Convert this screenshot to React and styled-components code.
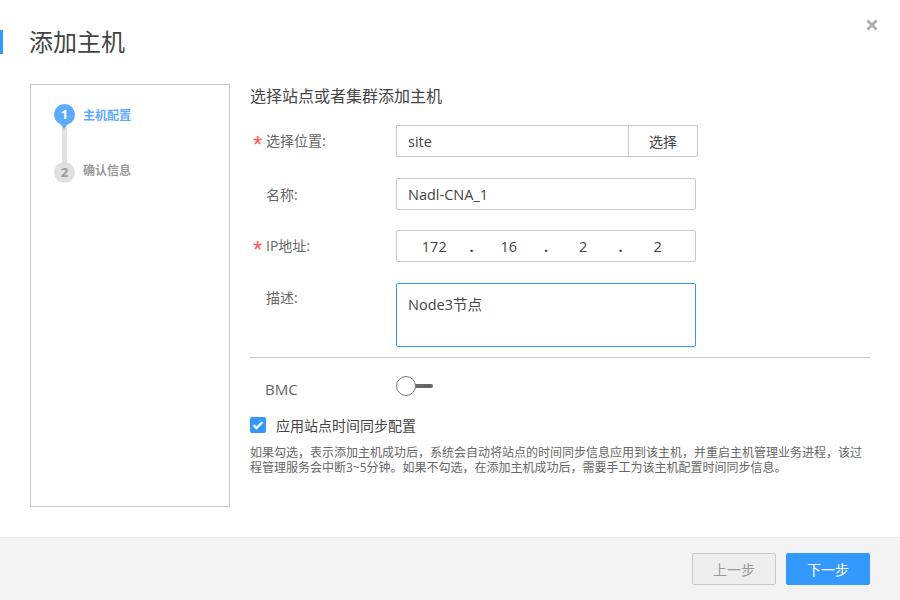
import React from "react";
import styled, { createGlobalStyle } from "styled-components";

const GlobalStyle = createGlobalStyle`
	html, body {
		margin: 0;
		padding: 0;
		background: #fff;
	}
	body {
		font-family: "Open Sans", "Noto Sans CJK SC", sans-serif;
		color: #333;
	}
	* {
		box-sizing: border-box;
	}
`;

const Dialog = styled.div`
	position: relative;
	width: 900px;
	height: 600px;
	display: flex;
	flex-direction: column;
	overflow: hidden;
`;

const Close = styled.svg`
	position: absolute;
	top: 19px;
	right: 22px;
	width: 12px;
	height: 12px;
`;

const Header = styled.div`
	height: 84px;
	padding-top: 30px;
`;

const Title = styled.h1`
	margin: 0;
	height: 24px;
	padding-left: 26px;
	border-left: 3px solid #3399ff;
	font-size: 24px;
	line-height: 24px;
	font-weight: 400;
	color: #444;
`;

const Body = styled.div`
	display: flex;
	gap: 20px;
	padding: 0 30px;
	height: 453px;
`;

const Steps = styled.div`
	width: 200px;
	height: 423px;
	border: 1px solid #c8c8c8;
	padding: 19px 0 0 23px;
`;

const Step = styled.div`
	position: relative;
	display: flex;
	gap: 8px;
	height: ${(p) => (p.$last ? "22px" : "58px")};
`;

const Dot = styled.div`
	position: relative;
	z-index: 1;
	width: 21px;
	height: 21px;
	border-radius: 50%;
	background: ${(p) => (p.$active ? "#5cabff" : "#e0e0e0")};
	color: ${(p) => (p.$active ? "#fff" : "#999")};
	font-size: 13px;
	font-weight: 700;
	line-height: 20px;
	text-align: center;
	&::after {
		content: "";
		display: ${(p) => (p.$active ? "block" : "none")};
		position: absolute;
		left: 5px;
		top: 18px;
		border-left: 5.5px solid transparent;
		border-right: 5.5px solid transparent;
		border-top: 7px solid #5cabff;
	}
`;

const Connector = styled.div`
	position: absolute;
	left: 8px;
	top: 20px;
	width: 5px;
	height: 42px;
	background: #e0e0e0;
`;

const StepLabel = styled.span`
	margin-top: ${(p) => (p.$active ? "2px" : "-1px")};
	font-size: 12px;
	line-height: 20px;
	font-weight: 700;
	color: ${(p) => (p.$active ? "#5cabff" : "#999")};
`;

const Main = styled.div`
	width: 620px;
`;

const Heading = styled.div`
	height: 24px;
	font-size: 16px;
	line-height: 24px;
	color: #444;
`;

const Row = styled.div`
	display: flex;
	align-items: ${(p) => (p.$top ? "flex-start" : "center")};
	height: ${(p) => p.$h}px;
	margin-top: ${(p) => p.$mt}px;
`;

const Label = styled.label`
	position: relative;
	width: 146px;
	padding-left: 16px;
	font-size: 14px;
	line-height: 20px;
	color: #666;
	margin-top: ${(p) => p.$mt || 0}px;
`;

const BmcLabel = styled(Label)`
	padding-left: 15px;
	font-size: 15px;
`;

const Star = styled.span`
	position: absolute;
	left: 3px;
	top: 1px;
	font-family: "Liberation Sans", sans-serif;
	font-size: 24px;
	line-height: 26px;
	color: #f55;
`;

const Field = styled.div`
	width: 300px;
	height: 100%;
	display: flex;
	align-items: center;
	padding: 0 11px;
	border: 1px solid #c8c8c8;
	border-radius: 2px;
	font-size: 14.5px;
	color: #444;
`;

const SiteField = styled(Field)`
	width: 232px;
	border-right: 0;
	border-radius: 2px 0 0 2px;
`;

const PickButton = styled.button`
	width: 70px;
	height: 100%;
	padding: 0;
	border: 1px solid #c8c8c8;
	border-radius: 0 2px 2px 0;
	background: #fff;
	font: inherit;
	font-size: 14px;
	color: #444;
`;

const IpField = styled(Field)`
	padding: 0;
	justify-content: space-between;
`;

const Octet = styled.span`
	width: 75px;
	text-align: center;
`;

const IpDot = styled.span`
	width: 0;
	display: flex;
	justify-content: center;
	font-weight: 700;
`;

const TextArea = styled(Field)`
	align-items: flex-start;
	padding-top: 11px;
	line-height: 20px;
	border-color: #3399ff;
`;

const Divider = styled.div`
	height: 1px;
	margin-top: 10px;
	background: #c8c8c8;
`;

const Switch = styled.div`
	position: relative;
	width: 37px;
	height: 20px;
	margin-top: -6px;
	&::before {
		content: "";
		position: absolute;
		left: 16px;
		top: 8px;
		width: 21px;
		height: 4px;
		border-radius: 2px;
		background: #666;
	}
`;

const Knob = styled.div`
	position: absolute;
	left: 0;
	top: 0;
	width: 20px;
	height: 20px;
	border-radius: 50%;
	border: 1px solid #777;
	background: #fff;
`;

const CheckRow = styled.div`
	display: flex;
	align-items: center;
	gap: 10px;
	margin-top: 16px;
	height: 20px;
	font-size: 14px;
	color: #444;
`;

const CheckBox = styled.span`
	width: 16px;
	height: 16px;
	display: flex;
	align-items: center;
	justify-content: center;
	border-radius: 2px;
	background: #3399ff;
`;

const Help = styled.p`
	margin: 10px 0 0;
	width: 620px;
	font-size: 12px;
	line-height: 15px;
	color: #666;
`;

const Footer = styled.div`
	flex: 1;
	display: flex;
	justify-content: flex-end;
	gap: 10px;
	padding: 15px 30px 0;
	background: #f3f3f3;
	border-top: 1px solid #ebebeb;
`;

const FooterButton = styled.button`
	width: 84px;
	height: 32px;
	padding: 0;
	border-radius: 2px;
	border: 1px solid ${(p) => (p.$primary ? "#3399ff" : "#c8c8c8")};
	background: ${(p) => (p.$primary ? "#3399ff" : "#eee")};
	color: ${(p) => (p.$primary ? "#fff" : "#999")};
	font: inherit;
	font-size: 14px;
`;

const App = () => {
	return (
		<Dialog>
			<GlobalStyle />
			<Close viewBox="0 0 12 12">
				<path d="M1.5 1.5L10.5 10.5M10.5 1.5L1.5 10.5" stroke="#b0b0b0" strokeWidth="3" />
			</Close>
			<Header>
				<Title>添加主机</Title>
			</Header>
			<Body>
				<Steps>
					<Step>
						<Connector />
						<Dot $active>1</Dot>
						<StepLabel $active>主机配置</StepLabel>
					</Step>
					<Step $last>
						<Dot>2</Dot>
						<StepLabel>确认信息</StepLabel>
					</Step>
				</Steps>
				<Main>
					<Heading>选择站点或者集群添加主机</Heading>
					<Row $h={32} $mt={17}>
						<Label>
							<Star>*</Star>选择位置:
						</Label>
						<SiteField>site</SiteField>
						<PickButton>选择</PickButton>
					</Row>
					<Row $h={32} $mt={21}>
						<Label $mt={1}>名称:</Label>
						<Field>Nadl-CNA_1</Field>
					</Row>
					<Row $h={32} $mt={20}>
						<Label>
							<Star>*</Star>IP地址:
						</Label>
						<IpField>
							<Octet>172</Octet>
							<IpDot>.</IpDot>
							<Octet>16</Octet>
							<IpDot>.</IpDot>
							<Octet>2</Octet>
							<IpDot>.</IpDot>
							<Octet>2</Octet>
						</IpField>
					</Row>
					<Row $h={64} $mt={21} $top>
						<Label $mt={5}>描述:</Label>
						<TextArea>Node3节点</TextArea>
					</Row>
					<Divider />
					<Row $h={20} $mt={21}>
						<BmcLabel $mt={-1}>BMC</BmcLabel>
						<Switch>
							<Knob />
						</Switch>
					</Row>
					<CheckRow>
						<CheckBox>
							<svg width="12" height="10" viewBox="0 0 12 10">
								<path d="M1.5 5L4.5 8L10.5 2" fill="none" stroke="#fff" strokeWidth="2.4" />
							</svg>
						</CheckBox>
						应用站点时间同步配置
					</CheckRow>
					<Help>
						如果勾选，表示添加主机成功后，系统会自动将站点的时间同步信息应用到该主机，并重启主机管理业务进程，该过程管理服务会中断3~5分钟。如果不勾选，在添加主机成功后，需要手工为该主机配置时间同步信息。
					</Help>
				</Main>
			</Body>
			<Footer>
				<FooterButton>上一步</FooterButton>
				<FooterButton $primary>下一步</FooterButton>
			</Footer>
		</Dialog>
	);
};

export default App;
